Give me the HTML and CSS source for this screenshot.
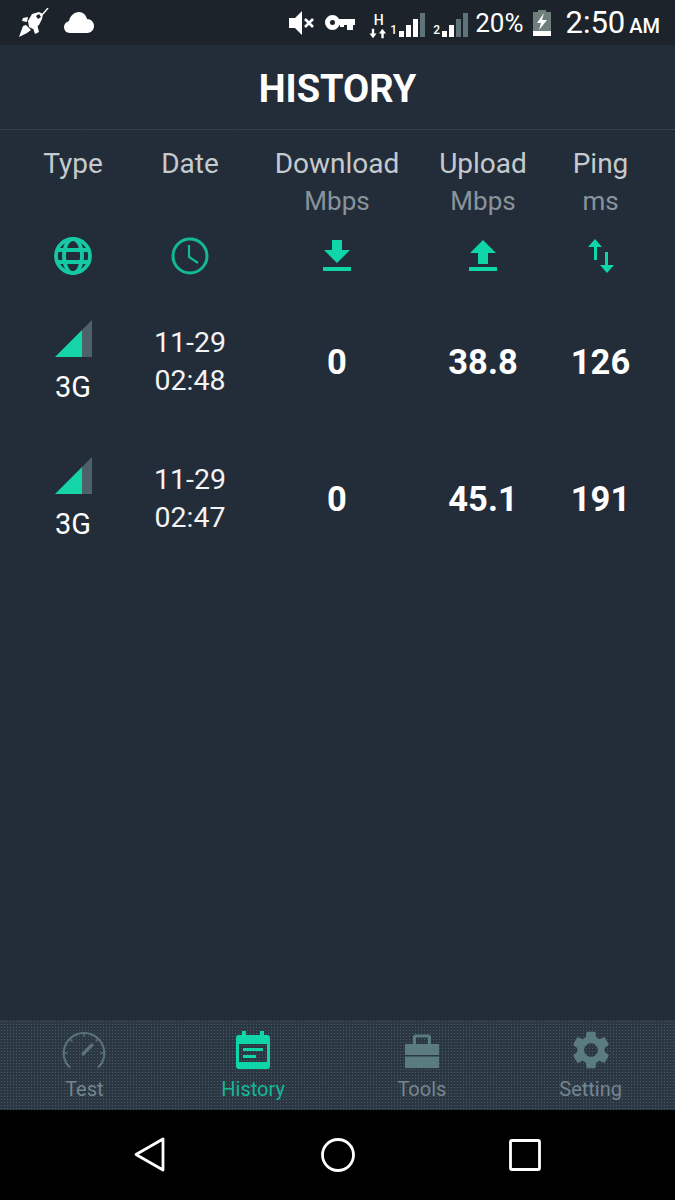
FILE: index.html
```html
<!DOCTYPE html>
<html lang="en">
<head>
    <meta charset="UTF-8">
    <meta name="viewport" content="width=device-width, initial-scale=1.0">
    <title>History</title>
    <link rel="stylesheet" href="styles.css">
</head>
<body>

    <!-- Status bar -->
    <div class="status-bar">
        <div class="status-left">
            <svg class="ic-rocket" viewBox="0 0 30 30" fill="#fff">
                <path d="M24 6L20 4l-7 2-4 7 1 6 4 2 6-4 3-6z"/>
                <path d="M0 29l4-11 3-1 5 5-4 3z"/>
                <path d="M9 9l-5 1-1 3 5 1zM18 16l2 8-4 2-2-6z"/>
                <path d="M20 6l2 3-3 2-2-3z" fill="#1c232b"/>
                <path d="M29 0l-6 7" stroke="#fff" stroke-width="1.400"/>
            </svg>
            <svg class="ic-cloud" viewBox="0 0 30 21" fill="#fff">
                <path d="M6 21C2 21 0 18 0 15c0-3 2-5 5-6C6 4 10 0 15 0c4 0 7 3 8 7 4 0 7 3 7 7 0 4-3 7-7 7z"/>
            </svg>
        </div>
        <div class="status-right">
            <svg class="ic-mute" viewBox="0 0 26 24" fill="#fff">
                <path d="M0 7h6l7-7v24l-7-7H0z"/>
                <path d="M16 8l8 8M24 8l-8 8" stroke="#fff" stroke-width="2.600" fill="none"/>
            </svg>
            <svg class="ic-key" viewBox="0 0 30 15" fill="#fff">
                <path fill-rule="evenodd" d="M7.500 0a7.500 7.500 0 1 1 0 15 7.500 7.500 0 0 1 0-15zm0 5a2.500 2.500 0 1 0 0 5 2.500 2.500 0 0 0 0-5z"/>
                <path d="M12 4h18v6h-2v5h-6v-5h-3v2h-4v-2h-3z"/>
            </svg>
            <div class="net-type">
                <span>H</span>
                <svg viewBox="0 0 20 10" fill="#fff"><path d="M3 0h2.500v5H8L4.200 10 .5 5H3zM14 0l4 5h-2.500v5H13V5h-2.500z"/></svg>
            </div>
            <div class="sim">
                <span class="sim-no">1</span>
                <div class="bars">
                    <i class="b1"></i><i class="b2"></i><i class="b3"></i><i class="b4 off"></i>
                </div>
            </div>
            <div class="sim sim-two">
                <span class="sim-no">2</span>
                <div class="bars">
                    <i class="b1"></i><i class="b2"></i><i class="b3 off"></i><i class="b4 off"></i>
                </div>
            </div>
            <span class="battery-pct">20%</span>
            <svg class="ic-battery" viewBox="0 0 18 26">
                <path d="M5 0h8v2h5v24H0V2h5z" fill="#6f7f7c"/>
                <path d="M0 21h18v5H0z" fill="#fff"/>
                <path d="M11 3L4 13h4l-2 7 8-10h-5z" fill="#fff"/>
            </svg>
            <span class="clock">2:50<small>AM</small></span>
        </div>
    </div>

    <div class="page">
        <h1 class="title">HISTORY</h1>

        <!-- Tabel riwayat -->
        <div class="grid head">
            <div class="cell"><span>Type</span></div>
            <div class="cell"><span>Date</span></div>
            <div class="cell"><span>Download</span><em>Mbps</em></div>
            <div class="cell"><span>Upload</span><em>Mbps</em></div>
            <div class="cell"><span>Ping</span><em>ms</em></div>
        </div>

        <div class="grid head-icons">
            <svg class="ic-38" viewBox="0 0 38 38" fill="none" stroke="#14c9a3" stroke-width="3.800">
                <circle cx="19" cy="19" r="17"/>
                <ellipse cx="19" cy="19" rx="9" ry="17"/>
                <path d="M2 13h34M2 25h34"/>
            </svg>
            <svg class="ic-38" viewBox="0 0 38 38" fill="none" stroke="#14b896" stroke-width="3">
                <circle cx="19" cy="19" r="17"/>
                <path d="M18 8v12l9 6" stroke-width="2.200"/>
            </svg>
            <svg class="ic-arrow" viewBox="0 0 28 32" fill="#0fd6a8">
                <path d="M9 0h10v10h8L14 23 1 10h8zM0 27h28v4H0z"/>
            </svg>
            <svg class="ic-arrow" viewBox="0 0 28 32" fill="#0fd6a8">
                <path d="M14 0l13 13h-8v11H9V13H1zM0 27h28v4H0z"/>
            </svg>
            <svg class="ic-swap" viewBox="0 0 26 34" fill="#0fd6a8">
                <path d="M7 0l7 8H9v13H6V8H0zM17 13h3v13h6l-7 8-7-8h5z"/>
            </svg>
        </div>

        <div class="grid row">
            <div class="type">
                <svg class="ic-signal" viewBox="0 0 37 37">
                    <path d="M27 10l10-10v37H27z" fill="#4d6168"/>
                    <path d="M0 37l27-27v27z" fill="#14d4a8"/>
                </svg>
                <span>3G</span>
            </div>
            <div class="date">11-29<br>02:48</div>
            <b>0</b>
            <b>38.8</b>
            <b>126</b>
        </div>

        <div class="grid row">
            <div class="type">
                <svg class="ic-signal" viewBox="0 0 37 37">
                    <path d="M27 10l10-10v37H27z" fill="#4d6168"/>
                    <path d="M0 37l27-27v27z" fill="#14d4a8"/>
                </svg>
                <span>3G</span>
            </div>
            <div class="date">11-29<br>02:47</div>
            <b>0</b>
            <b>45.1</b>
            <b>191</b>
        </div>
    </div>

    <!-- Menu bawah -->
    <div class="tabbar">
        <div class="tab">
            <svg viewBox="0 0 44 38" fill="none" stroke="#5a7279" stroke-width="2.200" stroke-linecap="round">
                <path d="M7.500 36C4 32.500 1.700 28 1.700 22.500 1.700 11 10.700 2 22 2s20.300 9 20.300 20.500c0 5.500-2.300 10-5.800 13.500"/>
                <path d="M21 23l9-9" stroke-width="3.200"/>
                <path d="M22 2v3M5 22H2M42 22h-3M8 8l2 2M36 8l-2 2" stroke-width="1.400"/>
            </svg>
            <span>Test</span>
        </div>
        <div class="tab active">
            <svg viewBox="0 0 34 38" fill="#0fd6a8">
                <path fill-rule="evenodd" d="M6 0h4v4h14V0h4v4h3c2 0 3 1 3 3v28c0 2-1 3-3 3H3c-2 0-3-1-3-3V7c0-2 1-3 3-3h3zM3 13v18h28V13z"/>
                <path d="M7 17h20v3H7zM7 24h13v3H7z"/>
            </svg>
            <span>History</span>
        </div>
        <div class="tab">
            <svg viewBox="0 0 34 38" fill="#5a7b80">
                <path fill-rule="evenodd" d="M8 13V6c0-1.500 1-2.500 2.500-2.500h13C25 3.500 26 4.500 26 6v7h8v11H0V13zM11 6.500V13h12V6.500z"/>
                <path d="M0 25.500h34V37H0z"/>
            </svg>
            <span>Tools</span>
        </div>
        <div class="tab">
            <svg viewBox="2 2 20 20" fill="#5a7b80">
                <path d="M19.14 12.94c.04-.3.06-.61.06-.94 0-.32-.02-.64-.07-.94l2.03-1.58c.18-.14.23-.41.12-.61l-1.92-3.32c-.12-.22-.37-.29-.59-.22l-2.39.96c-.5-.38-1.03-.7-1.62-.94l-.36-2.54c-.04-.24-.24-.41-.48-.41h-3.84c-.24 0-.43.17-.47.41l-.36 2.54c-.59.24-1.13.57-1.62.94l-2.39-.96c-.22-.08-.47 0-.59.22L2.74 8.87c-.12.21-.08.47.12.61l2.03 1.58c-.05.3-.09.63-.09.94s.02.64.07.94l-2.03 1.58c-.18.14-.23.41-.12.61l1.92 3.32c.12.22.37.29.59.22l2.39-.96c.5.38 1.03.7 1.62.94l.36 2.54c.05.24.24.41.48.41h3.84c.24 0 .44-.17.47-.41l.36-2.54c.59-.24 1.13-.56 1.62-.94l2.39.96c.22.08.47 0 .59-.22l1.92-3.32c.12-.22.07-.47-.12-.61l-2.01-1.58zM12 15.600c-1.980 0-3.600-1.620-3.600-3.600s1.620-3.600 3.600-3.600 3.600 1.620 3.600 3.600-1.620 3.600-3.600 3.600z"/>
            </svg>
            <span>Setting</span>
        </div>
    </div>

    <!-- Navigasi Android -->
    <div class="nav-bar">
        <svg class="nav-back" viewBox="0 0 32 36" fill="none" stroke="#fff" stroke-width="2.800" stroke-linejoin="round">
            <path d="M29 2v31L2 17.500z"/>
        </svg>
        <svg class="nav-home" viewBox="0 0 34 34" fill="none" stroke="#fff" stroke-width="2.800">
            <circle cx="17" cy="17" r="15.500"/>
        </svg>
        <svg class="nav-recent" viewBox="0 0 32 32" fill="none" stroke="#fff" stroke-width="2.800" stroke-linejoin="round">
            <rect x="1.500" y="1.500" width="29" height="29" rx="1.500"/>
        </svg>
    </div>

</body>
</html>
```

FILE: styles.css
```css
* {
    box-sizing: border-box;
}
body {
    margin: 0;
    width: 675px;
    height: 1200px;
    display: flex;
    flex-direction: column;
    font-family: Roboto, sans-serif;
    background-color: #232d39;
    color: #fff;
    overflow: hidden;
}
svg {
    display: block;
}

/* status bar */
.status-bar {
    height: 45px;
    flex: none;
    display: flex;
    justify-content: space-between;
    align-items: center;
    padding: 0 15px 0 19px;
    background: #1c232b;
}
.status-left {
    display: flex;
    align-items: center;
    gap: 15px;
}
.ic-rocket {
    width: 30px;
    height: 30px;
}
.ic-cloud {
    width: 30px;
    height: 21px;
}
.status-right {
    display: flex;
    align-items: center;
}
.ic-mute {
    width: 26px;
    height: 24px;
    margin-right: 10px;
}
.ic-key {
    width: 30px;
    height: 15px;
    margin-right: 13px;
}
.net-type {
    width: 21px;
    display: flex;
    flex-direction: column;
    align-items: center;
    font-size: 14px;
    font-weight: 500;
    line-height: 16px;
    padding-top: 6px;
}
.net-type svg {
    width: 19px;
    height: 11px;
}
.sim {
    display: flex;
    align-items: flex-end;
    height: 25px;
    margin-top: 4px;
}
.sim-two {
    margin-left: 7px;
}
.sim-no {
    width: 8px;
    text-align: right;
    font-size: 12px;
    line-height: 13px;
    font-weight: 500;
}
.bars {
    display: flex;
    align-items: flex-end;
    gap: 2px;
    height: 24px;
    margin-left: 2px;
}
.bars i {
    width: 5px;
    background: #fff;
}
.bars .off {
    background: #5e7479;
}
.b1 { height: 6px; }
.b2 { height: 12px; }
.b3 { height: 18px; }
.b4 { height: 24px; }
.battery-pct {
    font-size: 26px;
    margin: 0 10px 0 7px;
}
.ic-battery {
    width: 18px;
    height: 26px;
    margin-right: 14px;
}
.clock {
    font-size: 31px;
}
.clock small {
    font-size: 20px;
    font-weight: 500;
    margin-left: 4px;
}

/* page */
.page {
    flex: 1;
    min-height: 0;
}
.title {
    margin: 0;
    height: 85px;
    line-height: 88px;
    font-size: 38px;
    font-weight: 700;
    text-align: center;
    border-bottom: 1px dotted #46525e;
}
.grid {
    display: grid;
    grid-template-columns: 146px 88px 206px 86px 149px;
    justify-items: center;
}
.head {
    height: 92px;
    padding-top: 15px;
}
.cell {
    display: flex;
    flex-direction: column;
    align-items: center;
    font-size: 28px;
    line-height: 38px;
}
.cell span {
    color: #c5cace;
}
.cell em {
    font-style: normal;
    font-size: 26px;
    line-height: 37px;
    color: #89939b;
}
.head-icons {
    height: 62px;
    align-items: center;
    padding-top: 6px;
}
.ic-38 {
    width: 38px;
    height: 38px;
}
.ic-arrow {
    width: 28px;
    height: 32px;
}
.ic-swap {
    width: 26px;
    height: 34px;
}
.row {
    height: 137px;
    align-items: center;
    padding-top: 19px;
}
.row b {
    font-size: 34.500px;
    font-weight: 700;
}
.type {
    display: flex;
    flex-direction: column;
    align-items: center;
    font-size: 29px;
    line-height: 34px;
}
.ic-signal {
    width: 37px;
    height: 37px;
    margin-bottom: 13px;
}
.date {
    font-size: 28.500px;
    line-height: 38px;
    text-align: center;
    color: #f2f3f4;
}

/* bottom tabs */
.tabbar {
    height: 90px;
    flex: none;
    display: grid;
    grid-template-columns: repeat(4, 1fr);
    background-color: #2b3743;
    background-image: radial-gradient(#4a5b67 0.7px, transparent 0.8px);
    background-size: 3px 3px;
}
.tab {
    display: flex;
    flex-direction: column;
    align-items: center;
    padding-top: 11px;
    font-size: 20px;
    color: #75858d;
}
.tab svg {
    height: 38px;
}
.tab span {
    margin-top: 8px;
    line-height: 24px;
}
.tab.active {
    color: #14b896;
}

/* android nav */
.nav-bar {
    height: 90px;
    flex: none;
    background: #000;
    display: grid;
    grid-template-columns: 300px 75px 300px;
    align-items: center;
    justify-items: center;
}
.nav-back {
    width: 32px;
    height: 36px;
}
.nav-home {
    width: 34px;
    height: 34px;
}
.nav-recent {
    width: 32px;
    height: 32px;
}
```
